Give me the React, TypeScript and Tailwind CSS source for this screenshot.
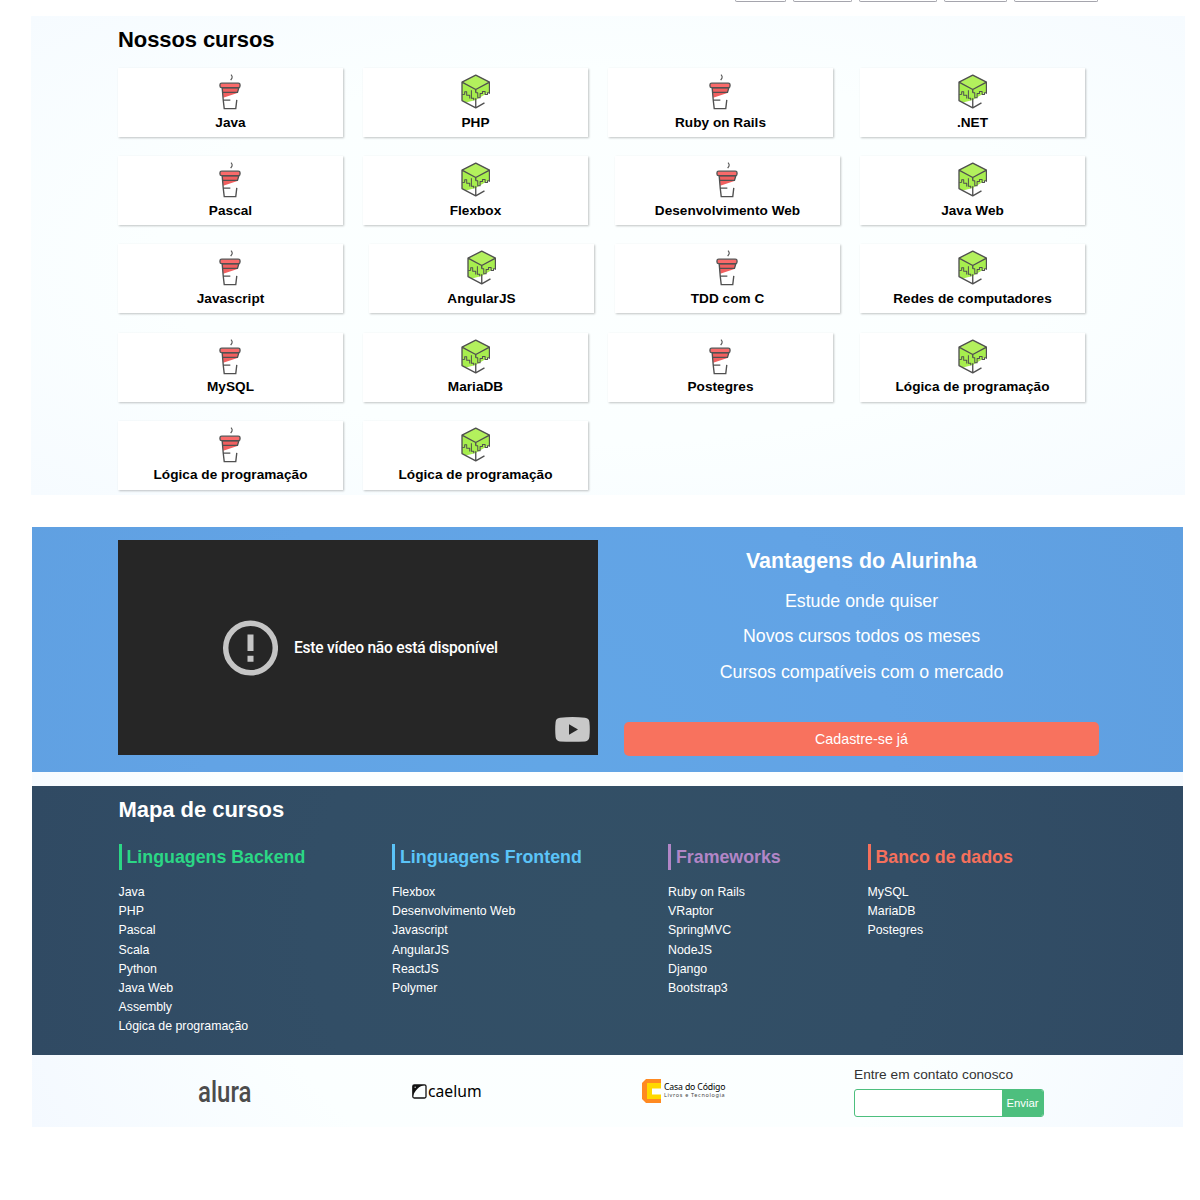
import React from "react";

function CupIcon() {
  return (
    <svg viewBox="58 42 64 106" className="mr-px h-[36px] w-[22px]" fill="none">
      <path d="M69 83h46l-3 15-42 14z" fill="#f15f5f" />
      <rect x="60.500" y="69" width="59" height="13" rx="5" fill="#f96a6a" stroke="#555" strokeWidth="4" />
      <path d="M93 44c4 4 4 7 3 10l-4 6" stroke="#555" strokeWidth="3.500" />
      <path d="M66 83h50l-4 13H69M67 83l3 35 3 26h34l3-26M71 119h20" stroke="#505050" strokeWidth="4" />
    </svg>
  );
}

function CubeIcon() {
  return (
    <svg viewBox="47 42 88 104" className="h-[35px] w-[29.500px]" fill="none" strokeLinejoin="round">
      <path d="M91 45L132 66V95L91 119L62 127L50 120V66z" fill="#a7ee4e" />
      <path d="M91 45L132 66 91 88 50 66z" fill="#b3f05d" />
      <path d="M50 66L91 45 132 66 91 88zM50 66v55l41 22 26-15M91 114v29M132 66v35M91 88v10" stroke="#505050" strokeWidth="4" />
      <path d="M51 103l7-1v-7h6v10h9v10M78 90v24h7v6M91 98h6v15h7v-13h7v-6h8v9h7v-5h6" stroke="#505050" strokeWidth="3" />
    </svg>
  );
}

type Course = { name: string; offset: string };

const rows: Course[][] = [
  [
    { name: "Java", offset: "" },
    { name: "PHP", offset: "ml-5" },
    { name: "Ruby on Rails", offset: "ml-5" },
    { name: ".NET", offset: "ml-[27px]" },
  ],
  [
    { name: "Pascal", offset: "" },
    { name: "Flexbox", offset: "ml-5" },
    { name: "Desenvolvimento Web", offset: "ml-[27px]" },
    { name: "Java Web", offset: "ml-5" },
  ],
  [
    { name: "Javascript", offset: "" },
    { name: "AngularJS", offset: "ml-[26px]" },
    { name: "TDD com C", offset: "ml-[21px]" },
    { name: "Redes de computadores", offset: "ml-5" },
  ],
  [
    { name: "MySQL", offset: "" },
    { name: "MariaDB", offset: "ml-5" },
    { name: "Postegres", offset: "ml-5" },
    { name: "Lógica de programação", offset: "ml-[27px]" },
  ],
  [
    { name: "Lógica de programação", offset: "" },
    { name: "Lógica de programação", offset: "ml-5" },
  ],
];

const groups = [
  {
    title: "Linguagens Backend",
    box: "w-[273.5px]",
    color: "border-[#2bd785] text-[#2bd785]",
    items: ["Java", "PHP", "Pascal", "Scala", "Python", "Java Web", "Assembly", "Lógica de programação"],
  },
  {
    title: "Linguagens Frontend",
    box: "w-[276px]",
    color: "border-[#5bc4f8] text-[#5bc4f8]",
    items: ["Flexbox", "Desenvolvimento Web", "Javascript", "AngularJS", "ReactJS", "Polymer"],
  },
  {
    title: "Frameworks",
    box: "w-[199.5px]",
    color: "border-[#b286c7] text-[#b286c7]",
    items: ["Ruby on Rails", "VRaptor", "SpringMVC", "NodeJS", "Django", "Bootstrap3"],
  },
  {
    title: "Banco de dados",
    box: "w-[200px]",
    color: "border-[#f5705c] text-[#f5705c]",
    items: ["MySQL", "MariaDB", "Postegres"],
  },
];

const tabs = ["w-[51px]", "w-[59px]", "w-[78px]", "w-[63px]", "w-[84px]"];

function Courses() {
  return (
    <section className="mt-[14px] ml-[31px] h-[479px] w-[1154px] bg-[radial-gradient(ellipse_at_center,#fcffff_0%,#fbffff_55%,#f6fbff_100%)] pt-[10px] pl-[87px]">
      <h2 className="h-[42px] text-[22px] leading-[28px] font-bold tracking-[-0.1px] text-black">Nossos cursos</h2>
      <div className="flex flex-col gap-[19.2px]">
        {rows.map((row, r) => (
          <div key={r} className="flex">
            {row.map((course, c) => (
              <div
                key={c}
                className={`flex h-[69px] w-[225px] shrink-0 flex-col items-center bg-white pt-[6px] shadow-[1px_1px_2px_rgba(0,0,0,0.24)] ${course.offset}`}
              >
                <div className="flex h-[36px] items-start">{c % 2 === 0 ? <CupIcon /> : <CubeIcon />}</div>
                <div className="mt-[3.5px] text-[13.6px] leading-[18px] font-bold tracking-[0.03px] whitespace-nowrap text-black">
                  {course.name}
                </div>
              </div>
            ))}
          </div>
        ))}
      </div>
    </section>
  );
}

function Advantages() {
  return (
    <section className="flex h-[245px] bg-[radial-gradient(circle_at_45%_100%,#62a6e6_0%,#62a3e5_50%,#5f9fe0_100%)] pt-[12.5px] pl-[86px] text-white">
      <div className="relative flex h-[215.5px] w-[479.5px] items-center bg-[#262626] pl-[104px]">
        <svg viewBox="0 0 56 56" className="h-[56px] w-[56px]" fill="none">
          <circle cx="28.500" cy="28" r="24.800" stroke="#c5c5c5" strokeWidth="5.5" />
          <path d="M25.500 14.500h6v16.500h-6zM25.500 35.800h6v6h-6z" fill="#c5c5c5" />
        </svg>
        <span className="ml-[16px] font-[Roboto] text-[15.6px] leading-5 font-medium tracking-[-0.230px] whitespace-nowrap">
          Este vídeo não está disponível
        </span>
        <svg viewBox="0 0 35 25" className="absolute right-[8px] bottom-[13px] h-[25px] w-[35px]">
          <path d="M5 .7Q17.500-.5 30 .7 34 1 34.400 5q.800 7.500 0 15-.400 4-4.400 4.400-12.500.800-25 0-4-.400-4.400-4.400-.800-7.500 0-15Q1 1 5 .7z" fill="#c8c8c8" />
          <path d="M14 7.200v10.600l9-5.300z" fill="#262626" />
        </svg>
      </div>
      <div className="ml-[26.500px] flex w-[475px] flex-col items-center text-[17.800px]">
        <h2 className="mt-[8px] mb-[10px] text-[21.400px] leading-[26px] font-bold">Vantagens do Alurinha</h2>
        <p className="leading-[35.600px]">Estude onde quiser</p>
        <p className="leading-[35.600px]">Novos cursos todos os meses</p>
        <p className="leading-[35.600px]">Cursos compatíveis com o mercado</p>
        <button className="mt-[31.500px] h-[34px] w-[475px] rounded-[5px] bg-[#f8725e] text-[14.300px] leading-[32px]">
          Cadastre-se já
        </button>
      </div>
    </section>
  );
}

function CourseMap() {
  return (
    <section className="mt-[14px] h-[269px] bg-[radial-gradient(circle_at_center,#335066_0%,#324e66_50%,#304a63_100%)] pt-[10px] pl-[86.500px] text-white">
      <h2 className="text-[22px] leading-[28px] font-bold tracking-[-0.050px]">Mapa de cursos</h2>
      <div className="mt-[20px] flex">
        {groups.map((g) => (
          <div key={g.title} className={g.box}>
            <h3 className={`border-l-3 pl-[5px] text-[17.800px] leading-[26px] font-bold whitespace-nowrap ${g.color}`}>
              {g.title}
            </h3>
            <ul className="mt-[12.500px] text-[12.350px] leading-[19.200px]">
              {g.items.map((item) => (
                <li key={item}>{item}</li>
              ))}
            </ul>
          </div>
        ))}
      </div>
    </section>
  );
}

function Footer() {
  return (
    <footer className="flex h-[72px] pl-[166px] text-black">
      <div className="flex w-[214px] pt-[18px]">
        <span className="origin-left scale-x-[0.800] font-[Roboto] text-[30px] leading-[38px] font-medium text-[#4c4c4c]">alura</span>
      </div>
      <div className="flex w-[230px] items-center">
        <svg viewBox="0 0 15 15" className="h-[15px] w-[15px]">
          <rect x=".8" y=".8" width="13.200" height="13.200" rx="1.500" fill="none" stroke="#111" strokeWidth="1.300" />
          <path d="M1 1h12C7 2 3 6 1 12z" fill="#111" />
          <circle cx="3.200" cy="3.200" r=".8" fill="#bbb" />
        </svg>
        <span className="ml-[1px] font-['Noto_Sans'] text-[15.700px] leading-5">caelum</span>
      </div>
      <div className="flex w-[212px] items-center">
        <svg viewBox="0 0 19 24" className="h-[24px] w-[19px]">
          <path d="M4 0h15v5H8v14h11v5H4l-4-4V4z" fill="#ff8a22" />
          <path d="M5 4h14v5.500h-9v6h9V20H5z" fill="#ffd800" />
        </svg>
        <div className="ml-[3px] flex flex-col font-['Noto_Sans'] whitespace-nowrap">
          <span className="text-[8.700px] leading-[9px] tracking-[-0.150px]">Casa do Código</span>
          <span className="text-[5.500px] leading-[7px] tracking-[0.650px] text-[#444]">Livros e Tecnologia</span>
        </div>
      </div>
      <div className="pt-[10px]">
        <p className="text-[13.700px] leading-5 text-[#333]">Entre em contato conosco</p>
        <div className="mt-[4px] flex h-[28px] w-[190px] overflow-hidden rounded-[3px] border border-[#4dbf7e] bg-white">
          <input aria-label="Contato" className="w-[147px] outline-none" />
          <button className="flex-1 bg-[#4dbf7e] text-[11.300px] text-white">Enviar</button>
        </div>
      </div>
    </footer>
  );
}

export default function App() {
  return (
    <div className="h-[1200px] w-[1200px] overflow-hidden bg-white font-['Liberation_Sans',Arial,sans-serif]">
      <div className="flex h-[2px] gap-[7px] pl-[735px]">
        {tabs.map((w) => (
          <div key={w} className={`h-[2px] rounded-b-[2px] border border-t-0 border-[#a5a5ad] ${w}`} />
        ))}
      </div>
      <Courses />
      <div className="mt-[32.400px] ml-[32px] h-[600px] w-[1151px] bg-[radial-gradient(circle_at_center,#fdffff_0%,#fbffff_60%,#f4f9ff_100%)]">
        <Advantages />
        <CourseMap />
        <Footer />
      </div>
    </div>
  );
}
